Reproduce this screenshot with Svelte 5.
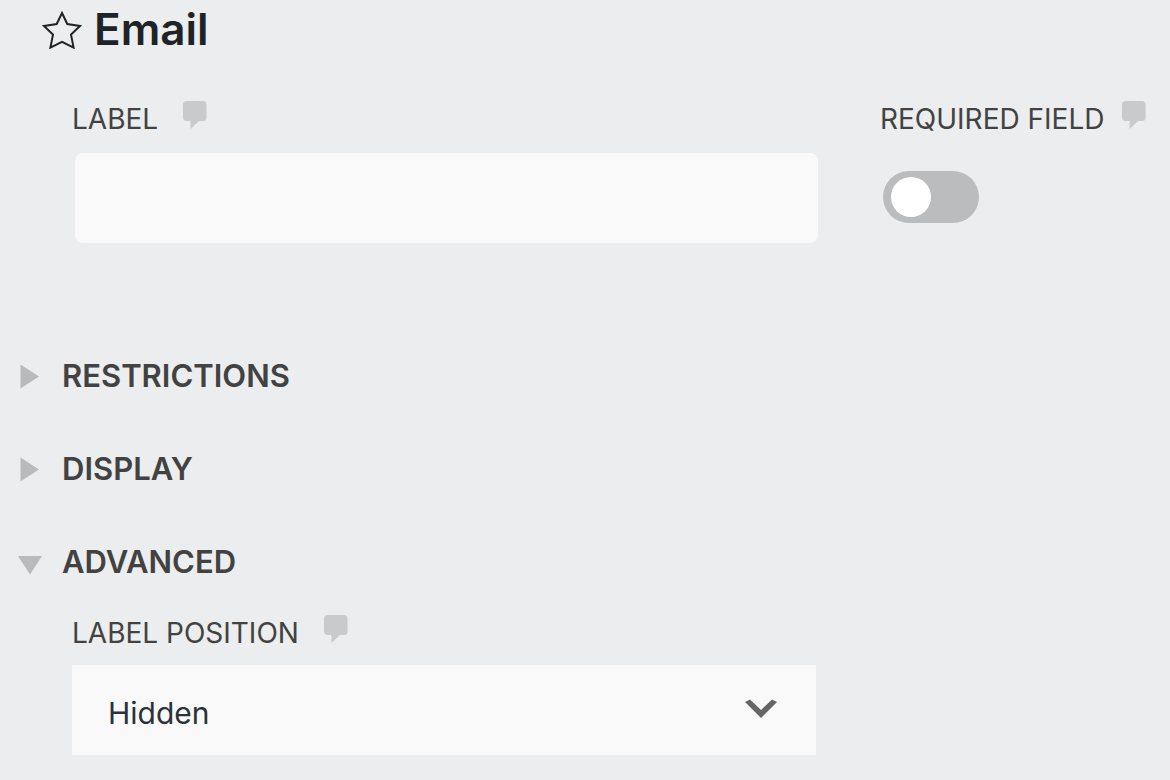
<script lang="ts">
  let label = $state('')
  let required = $state(false)
  let labelPosition = $state('Hidden')
  let open = $state({ restrictions: false, display: false, advanced: true })

  const positions = ['Hidden', 'Above Element', 'Below Element', 'Left of Element', 'Right of Element']
</script>

{#snippet help()}
  <button class="help" type="button" aria-label="Help">
    <svg width="24" height="28" viewBox="0 0 24 28" aria-hidden="true">
      <path d="M4 0H20Q23.5 0 23.5 3.5V16.5Q23.5 20 20 20H16L7.5 28V20H4Q0 20 0 16.5V3.5Q0 0 4 0Z" fill="#cacaca" />
    </svg>
  </button>
{/snippet}

{#snippet arrow(isOpen: boolean)}
  <svg class="arrow" width="24" height="26" viewBox="0 0 24 26" aria-hidden="true">
    {#if isOpen}
      <path d="M0 7H24L12 25.5Z" fill="#bababa" />
    {:else}
      <path d="M2.5 1.5L21 13.5L2.5 25.5Z" fill="#bababa" />
    {/if}
  </svg>
{/snippet}

<form class="settings">
  <header>
    <svg width="40" height="40" viewBox="0 0 40 40" aria-hidden="true">
      <path d="M20 4L25.3 15L38 17L29 25.6L31.6 38.6L20 32.8L8.4 38.6L11 25.6L2 17L14.7 15Z" fill="none" stroke="#1d2327" stroke-width="2" />
    </svg>
    <h1>Email</h1>
  </header>

  <div class="row">
    <div class="field main">
      <div class="field-label">
        <label for="label">LABEL</label>
        {@render help()}
      </div>
      <input id="label" class="text" type="text" bind:value={label} />
    </div>
    <div class="field side">
      <div class="field-label">
        <label for="required">REQUIRED FIELD</label>
        {@render help()}
      </div>
      <input id="required" class="toggle" type="checkbox" role="switch" bind:checked={required} />
    </div>
  </div>

  <section>
    <button class="heading" type="button" aria-expanded={open.restrictions} onclick={() => (open.restrictions = !open.restrictions)}>
      {@render arrow(open.restrictions)}
      RESTRICTIONS
    </button>
  </section>

  <section>
    <button class="heading" type="button" aria-expanded={open.display} onclick={() => (open.display = !open.display)}>
      {@render arrow(open.display)}
      DISPLAY
    </button>
  </section>

  <section>
    <button class="heading" type="button" aria-expanded={open.advanced} onclick={() => (open.advanced = !open.advanced)}>
      {@render arrow(open.advanced)}
      ADVANCED
    </button>
    {#if open.advanced}
      <div class="row advanced">
        <div class="field main">
          <div class="field-label">
            <label for="position">LABEL POSITION</label>
            {@render help()}
          </div>
          <div class="select">
            <select id="position" bind:value={labelPosition}>
              {#each positions as position}
                <option>{position}</option>
              {/each}
            </select>
            <svg width="32" height="20" viewBox="0 0 32 20" aria-hidden="true">
              <path d="M0 3L5 0.5L16 11L27 0.5L32 3L16 19Z" fill="#666" />
            </svg>
          </div>
        </div>
      </div>
    {/if}
  </section>
</form>

<style>
  :global(body) {
    margin: 0;
    background: #ebedee;
  }

  .settings {
    font-family: Inter, sans-serif;
    color: #424242;
    padding: 0 20px 24px 18px;
  }

  header {
    display: flex;
    align-items: center;
    gap: 12px;
    height: 58px;
    padding-left: 24px;
  }

  h1 {
    margin: 0;
    font-size: 44px;
    line-height: 58px;
    font-weight: 600;
    color: #1d2327;
  }

  .row {
    display: grid;
    grid-template-columns: 746fr 270fr;
    gap: 62px;
    padding-left: 54px;
  }

  header + .row {
    margin-top: 38px;
    margin-bottom: 86px;
  }

  .advanced {
    margin-top: 2px;
  }

  .field-label {
    display: flex;
    gap: 25px;
    height: 46px;
    font-size: 28px;
    line-height: 46px;
    white-space: nowrap;
  }

  .side .field-label {
    gap: 18px;
  }

  .help {
    align-self: flex-start;
    display: block;
    margin-top: 5px;
    padding: 0;
    border: none;
    background: none;
    cursor: pointer;
  }

  .help svg {
    display: block;
  }

  .text {
    display: block;
    box-sizing: border-box;
    width: calc(100% - 3px);
    height: 90px;
    margin: 11px 0 0 3px;
    padding: 0 32px;
    border: none;
    border-radius: 8px;
    background: #f9f9f9;
    font: inherit;
    font-size: 30px;
  }

  .toggle {
    appearance: none;
    display: block;
    width: 96px;
    height: 52px;
    margin: 29px 0 0 3px;
    border-radius: 26px;
    background: #bbbcbd;
    cursor: pointer;
  }

  .toggle::before {
    content: '';
    display: block;
    width: 40px;
    height: 40px;
    margin: 6px 8px;
    border-radius: 50%;
    background: #fff;
  }

  .toggle:checked::before {
    margin-left: 48px;
  }

  .heading {
    display: flex;
    align-items: center;
    gap: 20px;
    width: 100%;
    height: 93px;
    padding: 0;
    border: none;
    background: none;
    font: inherit;
    font-size: 31px;
    font-weight: 600;
    color: #424242;
    cursor: pointer;
  }

  .select {
    position: relative;
    height: 90px;
    margin: 9px 2px 0 0;
  }

  select {
    appearance: none;
    width: 100%;
    height: 100%;
    padding: 6px 80px 0 36px;
    border: none;
    border-radius: 0;
    background: #f9f9f9;
    font: inherit;
    font-size: 30px;
    color: #2c3338;
  }

  .select svg {
    position: absolute;
    top: 34px;
    right: 39px;
    pointer-events: none;
  }
</style>
